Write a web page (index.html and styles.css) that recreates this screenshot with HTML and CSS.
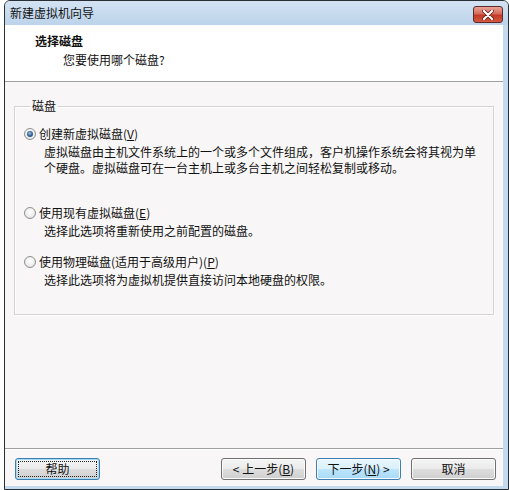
FILE: index.html
```html
<!DOCTYPE html>
<html lang="zh-CN">
<head>
<meta charset="utf-8">
<title>新建虚拟机向导</title>
<link rel="stylesheet" href="styles.css">
</head>
<body>
<div class="window">
  <div class="titlebar">
    <span class="title">新建虚拟机向导</span>
    <span class="close">
      <svg width="14" height="10" viewBox="0 0 14 10"><path d="M3 1 L11 9 M11 1 L3 9" stroke="#5a1a14" stroke-width="3.6" stroke-linecap="round"/><path d="M3 1 L11 9 M11 1 L3 9" stroke="#ffffff" stroke-width="2.2" stroke-linecap="round"/></svg>
    </span>
  </div>
  <div class="client">
    <div class="header">
      <div class="h-title">选择磁盘</div>
      <div class="h-sub">您要使用哪个磁盘?</div>
    </div>
    <div class="content">
      <fieldset class="group">
        <legend class="group-label">磁盘</legend>
        <div class="option opt1">
          <div class="opt-label"><span class="radio checked"></span>创建新虚拟磁盘(<u>V</u>)</div>
          <div class="opt-desc">虚拟磁盘由主机文件系统上的一个或多个文件组成，客户机操作系统会将其视为单<br>个硬盘。虚拟磁盘可在一台主机上或多台主机之间轻松复制或移动。</div>
        </div>
        <div class="option opt2">
          <div class="opt-label"><span class="radio"></span>使用现有虚拟磁盘(<u>E</u>)</div>
          <div class="opt-desc">选择此选项将重新使用之前配置的磁盘。</div>
        </div>
        <div class="option opt3">
          <div class="opt-label"><span class="radio"></span>使用物理磁盘(适用于高级用户)(<u>P</u>)</div>
          <div class="opt-desc">选择此选项将为虚拟机提供直接访问本地硬盘的权限。</div>
        </div>
      </fieldset>
    </div>
    <div class="footer">
      <button class="btn btn-help"><span class="focus">帮助</span></button>
      <button class="btn">&lt; 上一步(<u>B</u>)</button>
      <button class="btn btn-next">下一步(<u>N</u>) &gt;</button>
      <button class="btn">取消</button>
    </div>
  </div>
</div>
</body>
</html>
```
FILE: styles.css
```css
* { box-sizing: border-box; }
html, body { margin: 0; padding: 0; background: #ffffff; }
body {
  font-family: "Noto Sans CJK SC", "Liberation Sans", sans-serif;
  font-size: 12px;
  line-height: 16px;
  color: #111;
}
.window {
  margin-left: 4px;
  width: 505px;
  height: 490px;
  border: 1px solid #2a2f36;
  border-radius: 6px 6px 0 0;
  background: #c4daee;
  display: flex;
  flex-direction: column;
  overflow: hidden;
}
.titlebar {
  height: 24px;
  flex: none;
  display: flex;
  align-items: center;
  justify-content: space-between;
  background: linear-gradient(#d3e3f3, #bcd3ea);
  padding-left: 5px;
  padding-right: 5px;
}
.title { color: #111; }
.close {
  width: 30px;
  height: 17px;
  margin-top: 3px;
  border: 1px solid #5c2a26;
  border-radius: 3px;
  background: linear-gradient(#e9a49a 0%, #d66a5a 45%, #c23a27 55%, #d45a40 100%);
  display: flex;
  align-items: center;
  justify-content: center;
}
.close svg { display: block; }
.client {
  flex: 1;
  margin-right: 5px;
  margin-bottom: 3px;
  background: #f8f6f6;
  display: flex;
  flex-direction: column;
}
.header {
  height: 57px;
  flex: none;
  background: #ffffff;
  border-bottom: 1px solid #a0a0a0;
  padding: 8px 0 0 30px;
}
.h-title { font-weight: bold; }
.h-sub { margin-top: 3px; margin-left: 28px; }
.content {
  flex: 1;
  padding: 16px 9px 0 9px;
}
.group {
  margin: 0;
  padding: 12px 9px 26px 9px;
  border: 1px solid #d4d4d4;
  box-shadow: 1px 1px 0 #ffffff, inset 1px 1px 0 #ffffff;
  min-width: 0;
}
.group-label {
  margin-left: 6px;
  padding: 0 2px;
  line-height: 16px;
}
.opt-label {
  display: flex;
  align-items: center;
}
.radio {
  width: 12px;
  height: 12px;
  margin-right: 3px;
  border-radius: 50%;
  border: 1px solid #8e8f8f;
  background: radial-gradient(circle at 50% 40%, #ffffff 0%, #ececec 60%, #d2d2d2 100%);
  display: flex;
  align-items: center;
  justify-content: center;
  flex: none;
}
.radio.checked::after {
  content: "";
  display: block;
  width: 6px;
  height: 6px;
  border-radius: 50%;
  background: radial-gradient(circle at 45% 40%, #a8c6e6 0%, #3d6a9c 45%, #1b3350 100%);
}
.opt-desc { margin-left: 20px; margin-top: 2px; }
.opt2 { margin-top: 29px; }
.opt3 { margin-top: 15px; }
.footer {
  flex: none;
  display: flex;
  align-items: center;
  gap: 10px;
  border-top: 1px solid #a0a0a0;
  box-shadow: inset 0 1px 0 #ffffff;
  padding: 9px 7px 6px 10px;
}
.btn {
  width: 85px;
  height: 22px;
  padding: 0;
  font: inherit;
  color: #111;
  border: 1px solid #707070;
  border-radius: 3px;
  background: linear-gradient(#f4f4f4 0%, #ebebeb 50%, #dddddd 51%, #cfcfcf 100%);
  box-shadow: inset 0 0 0 1px #fbfbfb;
  display: flex;
  align-items: center;
  justify-content: center;
}
.btn-help {
  margin-right: auto;
  border-color: #3c7fb1;
  box-shadow: inset 0 0 0 1px #a6dbf6;
  padding: 2px;
}
.focus {
  flex: 1;
  align-self: stretch;
  display: flex;
  align-items: center;
  justify-content: center;
  border: 1px dotted #222;
}
.btn-next {
  border-color: #3c7fb1;
  background: linear-gradient(#eaf6fd 0%, #d9f0fc 50%, #bee6fd 51%, #a7d9f5 100%);
}
u { text-decoration: underline; text-underline-offset: 1px; }
```
